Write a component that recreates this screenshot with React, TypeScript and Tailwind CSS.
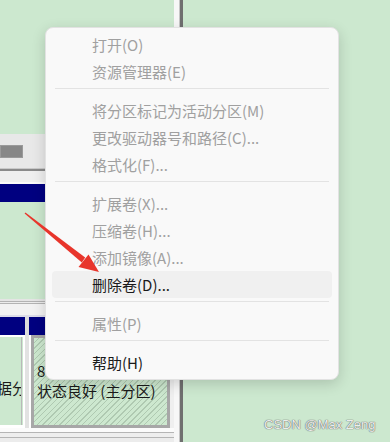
import React from "react";

type MenuEntry = { label: string; enabled?: boolean; active?: boolean } | "sep";

const menu: MenuEntry[] = [
  { label: "打开(O)" },
  { label: "资源管理器(E)" },
  "sep",
  { label: "将分区标记为活动分区(M)" },
  { label: "更改驱动器号和路径(C)..." },
  { label: "格式化(F)..." },
  "sep",
  { label: "扩展卷(X)..." },
  { label: "压缩卷(H)..." },
  { label: "添加镜像(A)..." },
  { label: "删除卷(D)...", enabled: true, active: true },
  "sep",
  { label: "属性(P)" },
  "sep",
  { label: "帮助(H)", enabled: true },
];

function ContextMenu() {
  return (
    <div className="absolute left-[45px] top-[27px] w-[294px] rounded-[8px] border border-[#e2e2e2] bg-[#f9f9f9] px-[6px] py-[3px] shadow-[0_4px_14px_rgba(0,0,0,0.16)]">
      {menu.map((item, i) =>
        item === "sep" ? (
          <div key={i} className="pb-[8px] pt-[3px]">
            <div className="mx-[3px] h-px bg-[#e3e3e3]" />
          </div>
        ) : (
          <div
            key={i}
            className={`flex h-[27px] items-center rounded-[4px] pl-[40px] text-[15px] leading-none ${
              item.active ? "bg-[#f0f0f0]" : ""
            } ${item.enabled ? "text-[#1a1a1a]" : "text-[#a0a0a0]"}`}
          >
            {item.label}
          </div>
        )
      )}
    </div>
  );
}

function DiskPanel() {
  return (
    <div className="flex h-full">
      <div className="flex w-[174px] flex-col">
        {/* volume list area */}
        <div className="h-[134px] bg-[#cce8cf]" />

        {/* scroll strip */}
        <div className="h-[34px] bg-[#e8e8e8] pt-[11px]">
          <div className="h-[13px] w-[23px] border border-[#9a9a9a] bg-[#878787]" />
        </div>
        <div className="h-px bg-[#c9c9c9]" />
        <div className="h-[2px] bg-[#8a8a8a]" />
        <div className="h-[11px] bg-[#efefef]" />
        <div className="h-[2px] bg-[#fafafa]" />

        {/* disk header */}
        <div className="h-[18px] bg-[#000080]" />
        <div className="h-[97px] bg-[#cce8cf]" />

        {/* separator lines */}
        <div className="h-[2px] bg-[#e4e4e4]" />
        <div className="h-px bg-[#b3b3b3]" />
        <div className="h-px bg-[#ececec]" />
        <div className="h-px bg-[#b3b3b3]" />
        <div className="h-[11px] bg-[#f2f2f2]" />
        <div className="h-[2px] bg-[#dcdce8]" />

        {/* partition headers */}
        <div className="flex h-[18px] bg-[#dcdcdc]">
          <div className="w-[25px] bg-[#000080]" />
          <div className="w-[4px]" />
          <div className="w-[141px] bg-[#000080]" />
          <div className="flex-1 bg-[#eeeeee]" />
        </div>

        {/* partitions */}
        <div className="flex h-[93px] bg-[#e2e2e2]">
          <div className="w-[25px] border-b-[3px] border-r-[2px] border-t-[2px] border-white bg-[#cce8cf] pr-px">
            <div className="h-full overflow-hidden border-r border-[#b9b9b9]">
              <div className="-ml-[18px] whitespace-nowrap pt-[41px] text-[15px] leading-[20px] text-[#1a1a1a]">
                数据分区
              </div>
            </div>
          </div>
          <div className="w-[4px]" />
          <div className="w-[141px] border-l-2 border-white">
            <div className="h-full border-[3px] border-[#a7a7a7] bg-[repeating-linear-gradient(135deg,#cde8cf_0px,#cde8cf_3px,#afc9b1_3px,#afc9b1_4px)]">
              <div className="whitespace-nowrap pl-[3px] pt-[23px] text-[15px] leading-[20px] text-[#1a1a1a]">
                <div>80.00 GB NTFS</div>
                <div>状态良好 (主分区)</div>
              </div>
            </div>
          </div>
          <div className="flex-1 bg-[#efefef]" />
        </div>

        {/* bottom lines */}
        <div className="h-[4px] bg-[#fbfbfb]" />
        <div className="h-px bg-[#b5b5b5]" />
        <div className="h-[4px] bg-[#eeeeee]" />
        <div className="h-px bg-[#b5b5b5]" />
        <div className="flex-1 bg-[#ececec]" />
      </div>

      {/* window edge */}
      <div className="flex">
        <div className="w-[5px] bg-[#f7f7f7]" />
        <div className="w-px bg-[#c6c6c6]" />
        <div className="w-[3px] bg-[#6f6f6f]" />
      </div>
    </div>
  );
}

function Arrow() {
  return (
    <svg className="pointer-events-none absolute left-0 top-0" width="390" height="442" viewBox="0 0 390 442">
      <polygon points="24.6,213.4 25.4,212.6 85.2,257.6 81.8,262.6" fill="#e8352b" />
      <polygon points="99,272 88.5,254.5 78.5,267" fill="#e8352b" />
    </svg>
  );
}

export default function App() {
  return (
    <div className="relative h-[442px] w-[390px] overflow-hidden bg-[#cce8cf] font-['Noto_Sans_CJK_SC',sans-serif]">
      <DiskPanel />
      <ContextMenu />
      <Arrow />
      <div className="absolute left-[264px] top-[416px] font-['Liberation_Sans',sans-serif] text-[13px] leading-[18px] text-[#ededed] [text-shadow:0_0_1px_#5f5f5f,0_0_1px_#5f5f5f]">
        CSDN @Max Zeng
      </div>
    </div>
  );
}
